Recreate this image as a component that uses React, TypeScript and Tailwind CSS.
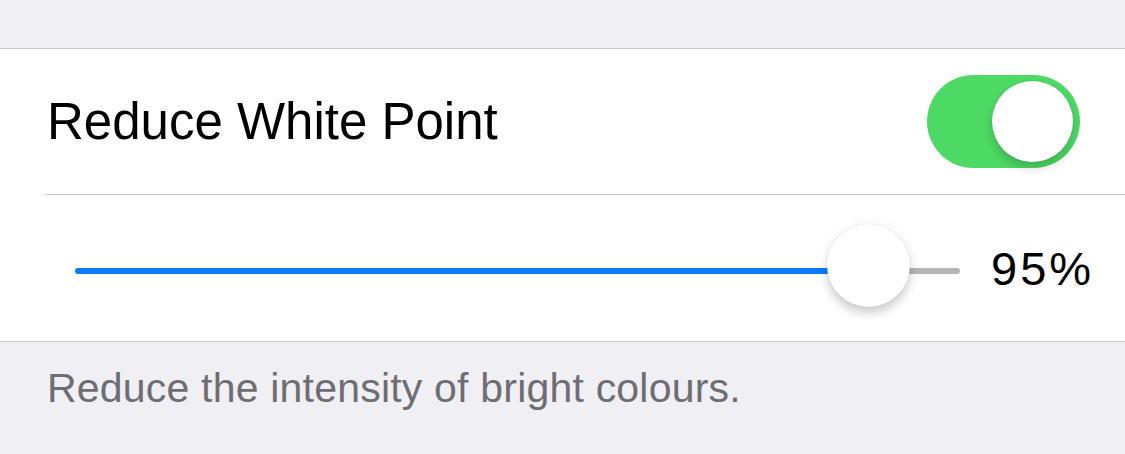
import React from "react";

export default function App() {
  return (
    <div
      className="w-[1125px] h-[454px] bg-[#efeff4] overflow-hidden"
      style={{ fontFamily: '"Liberation Sans", Arial, sans-serif' }}
    >
      <div className="h-[48px]" />
      <div className="bg-white border-t border-b border-[#c8c7cc]">
        <div className="h-[145px] flex items-center justify-between pl-[47px] pr-[45px]">
          <span className="text-[51px] leading-none text-black">Reduce White Point</span>
          <div className="relative w-[153px] h-[93px] rounded-full bg-[#4cd964]">
            <div className="absolute right-[7px] top-[6px] w-[81px] h-[81px] rounded-full bg-white shadow-[0_6px_10px_rgba(0,0,0,0.18),0_0_0_1px_rgba(0,0,0,0.04)]" />
          </div>
        </div>
        <div className="ml-[45px] h-px bg-[#c8c7cc]" />
        <div className="h-[146px] flex items-center pl-[75px]">
          <div className="relative w-[885px] h-[6px] mt-[6px]">
            <div className="absolute left-0 top-0 h-[6px] w-[793px] rounded-l-full bg-[#0a7aff]" />
            <div className="absolute right-0 top-0 h-[6px] w-[92px] rounded-r-full bg-[#b5b5b5]" />
            <div className="absolute left-[752px] top-[-44px] w-[83px] h-[83px] rounded-full bg-white shadow-[0_7px_10px_rgba(0,0,0,0.16),0_0_14px_rgba(0,0,0,0.06),0_0_0_0.5px_rgba(0,0,0,0.06)]" />
          </div>
          <span className="ml-[31px] text-[47px] leading-none text-black tracking-[3px]">95%</span>
        </div>
      </div>
      <div className="pl-[47px] pt-[26px]">
        <span className="text-[41px] leading-none text-[#6d6d72] tracking-[0.2px]">Reduce the intensity of bright colours.</span>
      </div>
    </div>
  );
}
